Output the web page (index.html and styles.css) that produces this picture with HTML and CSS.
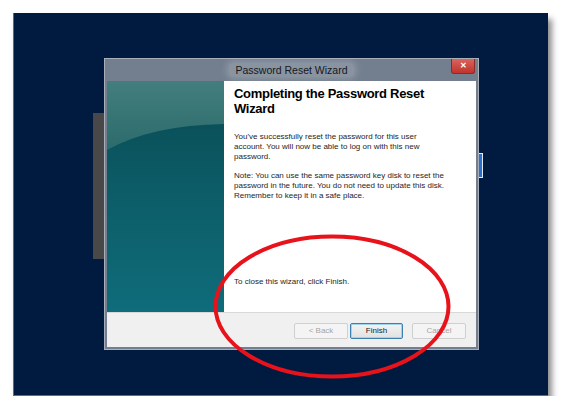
FILE: index.html
```html
<!DOCTYPE html>
<html lang="en">
<head>
    <meta charset="UTF-8">
    <title>Password Reset Wizard</title>
    <link rel="stylesheet" href="styles.css">
</head>
<body>
<div class="screen">
    <div class="back_window"></div>
    <div class="side_window"></div>
    <div class="dialog">
        <div class="title_bar">
            <span class="title_text">Password Reset Wizard</span>
            <div class="btn_close">&#x2715;</div>
        </div>
        <div class="wizard_body">
            <div class="wizard_art">
                <svg width="117" height="231" viewBox="0 0 117 231">
                    <defs>
                        <linearGradient id="teal" x1="0" y1="0" x2="0" y2="1">
                            <stop offset="0" stop-color="#094a52"/>
                            <stop offset="0.5" stop-color="#0c5d68"/>
                            <stop offset="1" stop-color="#0f6c7a"/>
                        </linearGradient>
                        <linearGradient id="shine" x1="0" y1="0" x2="0" y2="1">
                            <stop offset="0" stop-color="#427e7c"/>
                            <stop offset="1" stop-color="#2c6b6d"/>
                        </linearGradient>
                    </defs>
                    <rect width="117" height="231" fill="url(#teal)"/>
                    <path d="M0 0 H117 V43 Q45 44 0 69 Z" fill="url(#shine)"/>
                </svg>
            </div>
            <div class="wizard_text">
                <div class="heading">Completing the Password Reset Wizard</div>
                <p class="msg">You've successfully reset the password for this user account. You will now be able to log on with this new password.</p>
                <p class="msg note">Note: You can use the same password key disk to reset the password in the future. You do not need to update this disk. Remember to keep it in a safe place.</p>
                <p class="msg finish_note">To close this wizard, click Finish.</p>
            </div>
        </div>
        <div class="btn_area">
            <div class="btn disabled">&lt; Back</div>
            <div class="btn btn_finish">Finish</div>
            <div class="btn disabled btn_cancel">Cancel</div>
        </div>
    </div>
</div>
<svg class="marker" width="567" height="417" viewBox="0 0 567 417">
    <ellipse cx="332" cy="306.5" rx="116.5" ry="70" fill="none" stroke="#e8121b" stroke-width="4"/>
</svg>
</body>
</html>
```

FILE: styles.css
```css
body{
    margin: 0;
    background-color: white;
    font-family: "Liberation Sans", Arial, sans-serif;
}
.screen{
    position: relative;
    box-sizing: border-box;
    width: 535px;
    height: 383px;
    margin: 13px 0 0 13px;
    padding: 45px 0 0 90px;
    background-color: #011a40;
    border-left: 1px solid #5d6c86;
    border-bottom: 1px solid #5d6c86;
    box-shadow: 4px 6px 6px rgba(0, 0, 0, 0.45);
}
/* windows sitting behind the wizard */
.screen>.back_window{
    position: absolute;
    left: 79px;
    top: 100px;
    width: 20px;
    height: 146px;
    background-color: #484848;
}
.screen>.side_window{
    position: absolute;
    left: 464px;
    top: 140px;
    width: 3px;
    height: 23px;
    background-color: #2b6fcf;
    border: 1px solid #e4ecf6;
}
.dialog{
    position: relative;
    box-sizing: border-box;
    width: 375px;
    height: 292px;
    padding: 0 2px 2px;
    background-color: #737e8e;
    border: 1px solid #a8afb8;
    display: flex;
    flex-direction: column;
}
.dialog>.title_bar{
    position: relative;
    height: 22px;
    overflow: hidden;
    display: flex;
    align-items: center;
    justify-content: center;
}
.title_bar>.title_text{
    padding: 1px 6px;
    font-size: 10.5px;
    color: #15181d;
    background-color: #8a94a1;
    box-shadow: 0 0 6px 3px #8a94a1;
    border-radius: 5px;
}
.title_bar>.btn_close{
    position: absolute;
    top: 0;
    right: 1px;
    width: 24px;
    height: 15px;
    box-sizing: border-box;
    background: linear-gradient(#d9655c, #c0342c);
    border: 1px solid #8e2b25;
    border-top: 0;
    border-radius: 0 0 3px 3px;
    color: white;
    font-size: 8px;
    font-weight: bold;
    text-align: center;
    line-height: 14px;
}
.dialog>.wizard_body{
    height: 231px;
    display: flex;
    background-color: white;
}
.wizard_body>.wizard_art{
    width: 117px;
    height: 231px;
}
.wizard_art>svg{
    display: block;
}
.wizard_body>.wizard_text{
    flex: 1;
    box-sizing: border-box;
    padding: 5px 32px 25px 10px;
    display: flex;
    flex-direction: column;
}
.wizard_text>.heading{
    font-size: 13px;
    font-weight: bold;
    line-height: 15px;
    letter-spacing: -0.3px;
    color: black;
}
.wizard_text>.msg{
    margin: 16px 0 0;
    font-size: 8px;
    line-height: 10px;
    color: #1e1e1e;
}
.wizard_text>.note{
    margin-top: 9px;
}
.wizard_text>.finish_note{
    margin-top: auto;
}
.dialog>.btn_area{
    flex: 1;
    box-sizing: border-box;
    padding: 10px 10px 0 0;
    background-color: #f0f0f0;
    border-top: 1px solid #d8d8d8;
    display: flex;
    justify-content: flex-end;
    align-items: flex-start;
}
.btn_area>.btn{
    box-sizing: border-box;
    width: 54px;
    height: 16px;
    border: 1px solid #adadad;
    border-radius: 2px;
    background: linear-gradient(#f4f4f4, #e1e1e1);
    font-size: 8px;
    line-height: 14px;
    text-align: center;
    color: #1a1a1a;
}
.btn_area>.disabled{
    border-color: #cfcfcf;
    background: #f4f4f4;
    color: #a6a6a6;
}
.btn_area>.btn_finish{
    margin-left: 2px;
    width: 53px;
    border-color: #3c7fb1;
    box-shadow: inset 0 0 0 1px #9fd3f0;
}
.btn_area>.btn_cancel{
    margin-left: 9px;
}
.marker{
    position: absolute;
    left: 0;
    top: 0;
    pointer-events: none;
}
```
